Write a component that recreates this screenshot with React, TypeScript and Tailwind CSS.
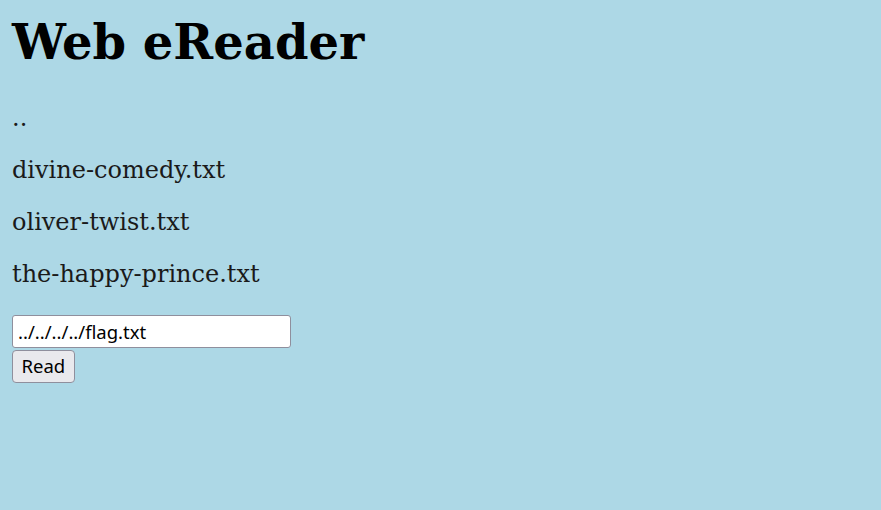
export default function App() {
  return (
    <div className="min-h-[510px] bg-[#add8e6] px-[12px] pt-[1px] text-black">
      <div className="font-['DejaVu_Serif',serif]">
        <h1 className="mt-[13px] mb-[34px] text-[48px] leading-[56px] font-bold">Web eReader</h1>
        <div className="flex flex-col gap-[24px] text-[24px] leading-[28px] text-[#1a1a1a]">
          <p>..</p>
          <p>divine-comedy.txt</p>
          <p>oliver-twist.txt</p>
          <p>the-happy-prince.txt</p>
        </div>
      </div>
      <div className="mt-[27px] flex flex-col items-start font-['Noto_Sans',sans-serif]">
        <input
          readOnly
          value="../../../../flag.txt"
          className="h-[33px] w-[279px] rounded-[3px] border border-[#8f8f9d] bg-white px-[5px] text-[18.5px] text-black outline-none"
        />
        <button className="mt-[2px] h-[33px] rounded-[4px] border border-[#8f8f9d] bg-[#e9e9ed] px-[8.5px] text-[18.5px] leading-none text-black">
          Read
        </button>
      </div>
    </div>
  );
}
